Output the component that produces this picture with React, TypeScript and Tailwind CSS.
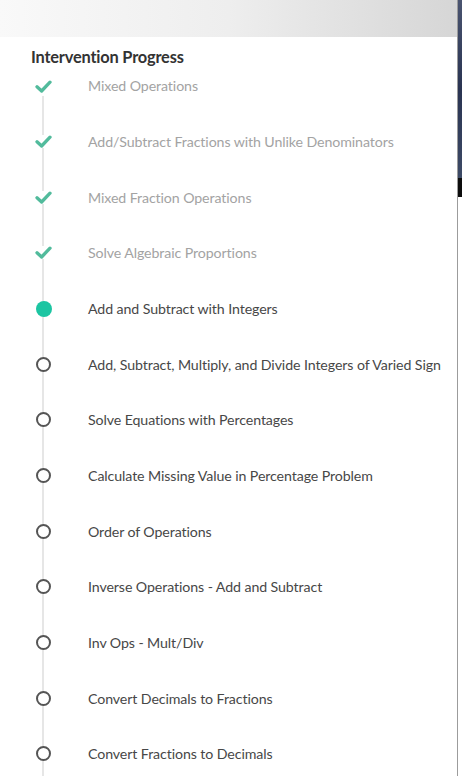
import React from 'react';

type Status = 'done' | 'current' | 'todo';

interface Step {
  title: string;
  status: Status;
}

const steps: Step[] = [
  { title: 'Mixed Operations', status: 'done' },
  { title: 'Add/Subtract Fractions with Unlike Denominators', status: 'done' },
  { title: 'Mixed Fraction Operations', status: 'done' },
  { title: 'Solve Algebraic Proportions', status: 'done' },
  { title: 'Add and Subtract with Integers', status: 'current' },
  { title: 'Add, Subtract, Multiply, and Divide Integers of Varied Sign', status: 'todo' },
  { title: 'Solve Equations with Percentages', status: 'todo' },
  { title: 'Calculate Missing Value in Percentage Problem', status: 'todo' },
  { title: 'Order of Operations', status: 'todo' },
  { title: 'Inverse Operations - Add and Subtract', status: 'todo' },
  { title: 'Inv Ops - Mult/Div', status: 'todo' },
  { title: 'Convert Decimals to Fractions', status: 'todo' },
  { title: 'Convert Fractions to Decimals', status: 'todo' },
];

const StepIcon: React.FC<{ status: Status }> = ({ status }) => {
  if (status === 'done') {
    return (
      <svg width="17" height="13" viewBox="0 0 17 13" className="bg-white">
        <path d="M2 6.8 L6.6 11 L15 2.2" fill="none" stroke="#52bb9c" strokeWidth="3.3" strokeLinecap="round" strokeLinejoin="round" />
      </svg>
    );
  }
  if (status === 'current') {
    return <div className="h-4 w-4 rounded-full bg-[#1cc5a2]" />;
  }
  return <div className="h-[15px] w-[15px] rounded-full border-[2.5px] border-[#555] bg-white" />;
};

export default function App() {
  return (
    <div className="flex h-[776px] w-[462px] overflow-hidden bg-white font-['Lato','Noto_Sans',sans-serif]">
      <div className="flex w-[457px] flex-col">
        <div className="h-[37px] shrink-0 bg-gradient-to-r from-[#f9f9f9] via-[#eeeeee] to-[#d6d6d6]" />
        <div className="flex-1 bg-white">
          <h2 className="pl-[31px] pt-[10px] pb-[4px] text-[16.4px] font-bold leading-5 tracking-[-0.2px] text-[#333]">Intervention Progress</h2>
          <div className="relative">
            {/* timeline rail */}
            <div className="absolute left-[42px] top-[25px] h-[720px] w-[2px] bg-[#e6e6e6]" />
            {steps.map((step) => (
              <div key={step.title} className="relative flex h-[55.67px] items-start">
                <div className="flex h-[30px] w-[86px] items-center justify-center pl-[1px]">
                  <StepIcon status={step.status} />
                </div>
                <span
                  className={`flex h-[30px] items-center pl-[2px] text-[14.2px] tracking-[-0.1px] ${
                    step.status === 'done' ? 'text-[#a3a3a3]' : 'text-[#474747]'
                  }`}
                >
                  {step.title}
                </span>
              </div>
            ))}
          </div>
        </div>
      </div>
      <div className="w-[1px] bg-[#9c9c9c]" />
      <div className="flex w-[4px] flex-col">
        <div className="h-[178px] bg-gradient-to-b from-[#4a5470] via-[#2a3452] to-[#3d4a66]" />
        <div className="h-[19px] bg-[#0d0d0d]" />
        <div className="flex-1 bg-white" />
      </div>
    </div>
  );
}
